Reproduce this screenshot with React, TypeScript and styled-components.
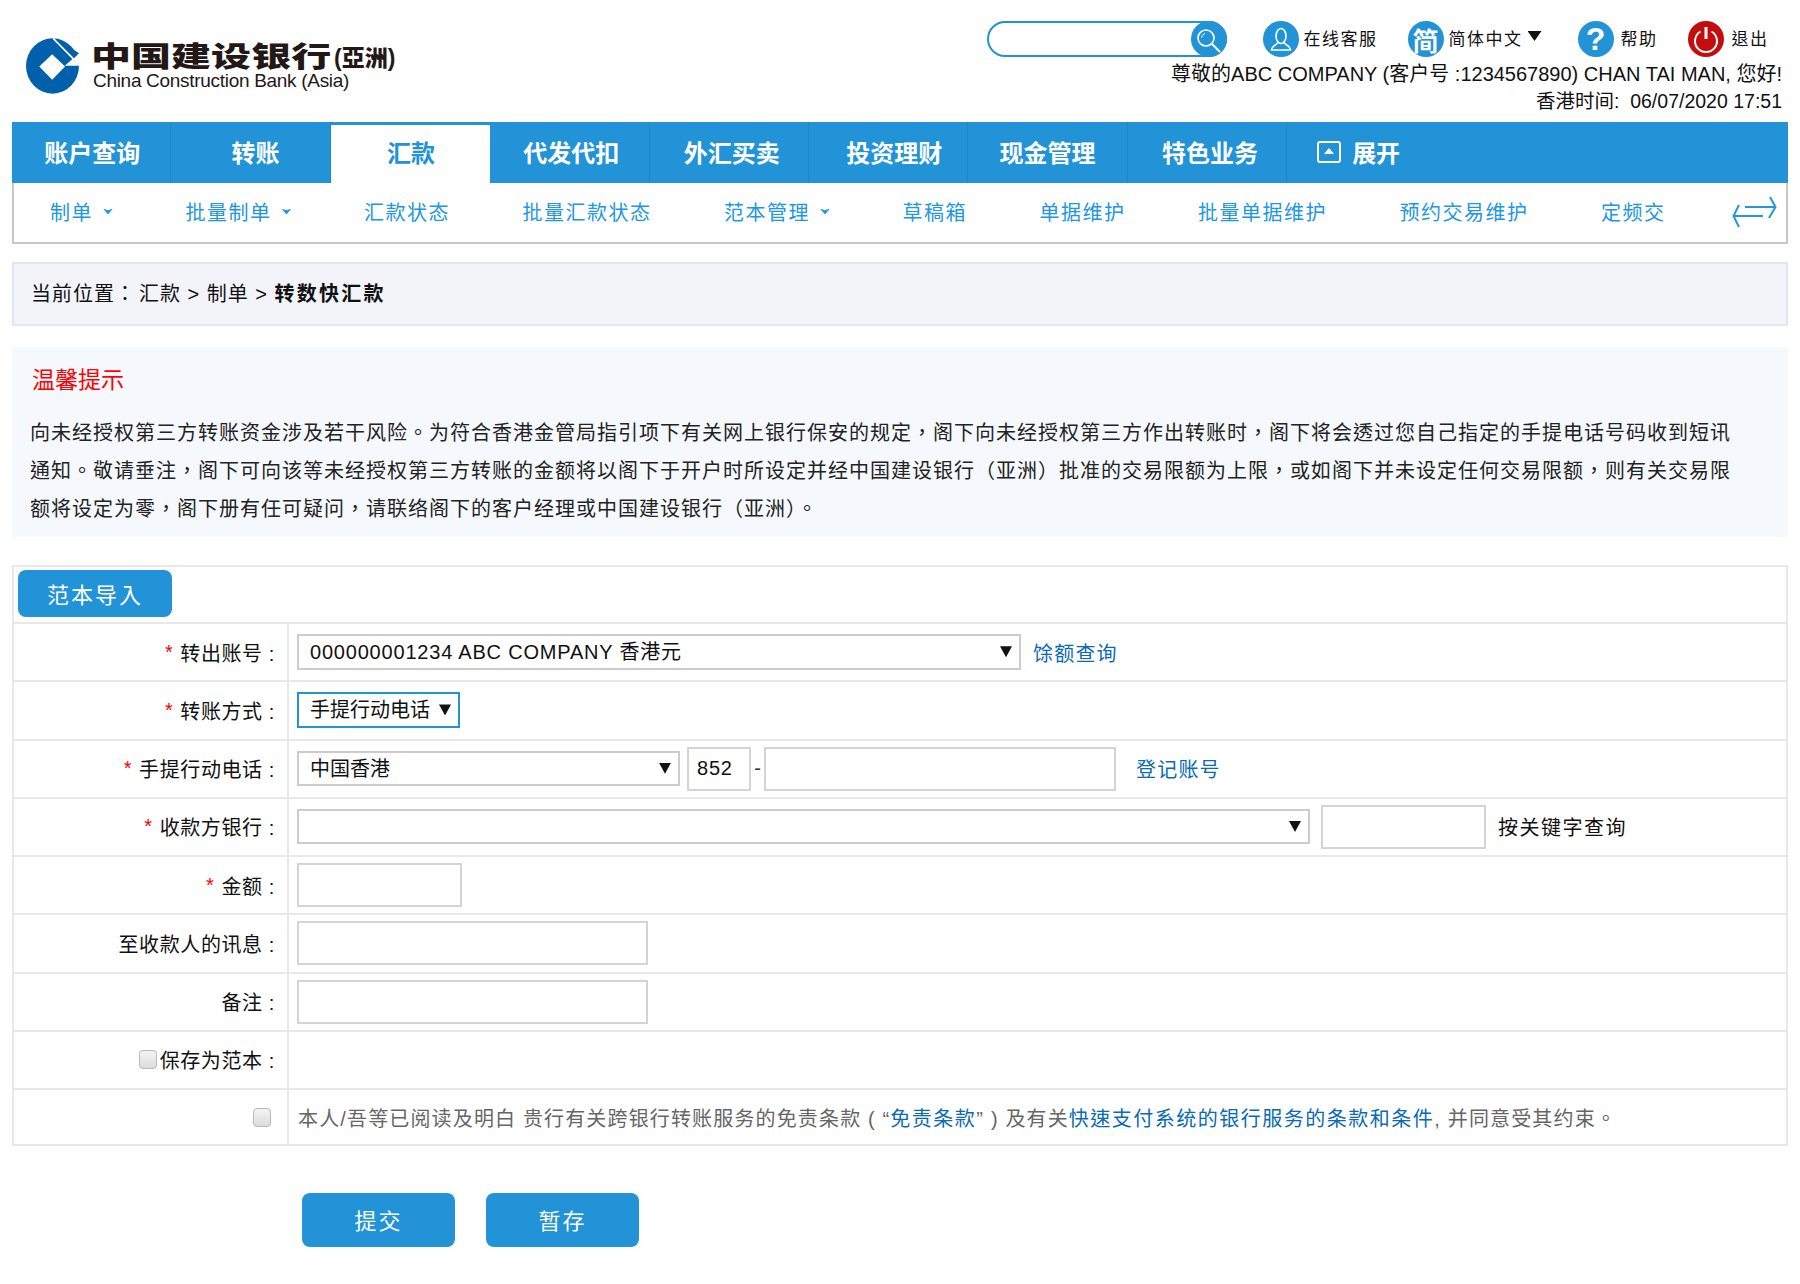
import { FC } from 'react';
import styled, { createGlobalStyle } from 'styled-components';

const FONT = `'Liberation Sans', 'Noto Sans CJK TC', sans-serif`;
const BLUE = '#2193d6';
const RED = '#c40d0d';
const LINK = '#0a6ab5';
const SUB_BLUE = '#2196e3';

const GlobalStyle = createGlobalStyle`
  html, body {
    margin: 0;
    background: #ffffff;
  }
  body {
    font-family: ${FONT};
    color: #111111;
  }
  * {
    box-sizing: border-box;
  }
`;

const Page = styled.div`
  width: 1800px;
  min-height: 1284px;
  padding: 0 12px;
`;

const Header = styled.header`
  display: flex;
  justify-content: space-between;
  height: 122px;
`;

const Logo = styled.a`
  display: flex;
  gap: 12px;
  padding: 38px 0 0 14px;
  color: #231815;
`;

const LogoText = styled.div`
  display: flex;
  flex-direction: column;
  padding-top: 6px;
`;

const LogoNameRow = styled.div`
  display: flex;
  align-items: flex-end;
  height: 27px;
`;

const LogoName = styled.span`
  display: block;
  width: 168px;
  font-size: 28px;
  line-height: 27px;
  font-weight: 900;
  white-space: nowrap;
  transform: scaleX(1.43);
  transform-origin: left center;
`;

const LogoArea = styled.span`
  margin-left: 75px;
  font-size: 23px;
  line-height: 26px;
  font-weight: 900;
  white-space: nowrap;
`;

const LogoEn = styled.span`
  margin-left: 2px;
  font-size: 19px;
  line-height: 20px;
  letter-spacing: -0.3px;
  white-space: nowrap;
`;

const HeaderRight = styled.div`
  display: flex;
  flex-direction: column;
  align-items: flex-end;
  padding: 21px 6px 0 0;
`;

const Tools = styled.div`
  display: flex;
  align-items: center;
  gap: 30px;
  height: 36px;
  padding-right: 13.5px;
`;

const Search = styled.div`
  display: flex;
  justify-content: flex-end;
  width: 240px;
  height: 36px;
  margin-right: 5.5px;
  border: 2px solid ${BLUE};
  border-radius: 18px;
  position: relative;
`;

const SearchIcon = styled.svg`
  position: absolute;
  top: -2px;
  right: -2px;
`;

const Tool = styled.div<{ $gap: number }>`
  display: flex;
  align-items: center;
  gap: ${(p) => p.$gap}px;
  font-size: 17px;
  letter-spacing: 1.5px;
  white-space: nowrap;
`;

const ToolText = styled.span`
  position: relative;
  top: -2px;
`;

const Badge = styled.span<{ $size?: number; $bg?: string }>`
  display: flex;
  align-items: center;
  justify-content: center;
  width: 36px;
  height: 36px;
  border-radius: 50%;
  background: ${(p) => p.$bg ?? BLUE};
  color: #ffffff;
  font-size: ${(p) => p.$size ?? 26}px;
  font-weight: 700;
  letter-spacing: 0;
`;

const LangCaret = styled.i`
  display: block;
  width: 14px;
  height: 10px;
  margin: -6px 6px 0 0;
  background: #111111;
  clip-path: polygon(0 0, 100% 0, 50% 100%);
`;

const Greeting = styled.div`
  margin-top: 4px;
  font-size: 20px;
  line-height: 27px;
  white-space: pre;
`;

const Clock = styled.div`
  font-size: 19.5px;
  line-height: 27px;
  white-space: pre;
`;

const Nav = styled.nav`
  display: flex;
  height: 61px;
  background: ${BLUE};
`;

const NavTab = styled.a<{ $active?: boolean; $nudge: number }>`
  display: flex;
  align-items: center;
  justify-content: center;
  width: 159.4px;
  margin-top: ${(p) => (p.$active ? '3px' : '0')};
  padding-bottom: ${(p) => (p.$active ? '5px' : '2px')};
  padding-left: ${(p) => p.$nudge}px;
  background: ${(p) => (p.$active ? '#ffffff' : 'transparent')};
  color: ${(p) => (p.$active ? BLUE : '#ffffff')};
  border-right: 1px solid ${(p) => (p.$active ? '#ffffff' : '#1d86c4')};
  font-size: 24px;
  font-weight: 700;
`;

const NavExpand = styled.a`
  display: flex;
  align-items: center;
  gap: 11px;
  padding: 0 0 2px 30px;
  color: #ffffff;
  font-size: 24px;
  font-weight: 700;
`;

const SubNav = styled.div`
  display: flex;
  align-items: center;
  gap: 72.5px;
  height: 61px;
  padding: 0 8px 2px 36px;
  border: 2px solid #c8c8c8;
  border-top: 0;
`;

const SubItem = styled.a`
  display: flex;
  align-items: center;
  gap: 10px;
  color: ${SUB_BLUE};
  font-size: 20px;
  letter-spacing: 1.5px;
  white-space: nowrap;
`;

const SubCaret = styled.i`
  display: block;
  width: 10px;
  height: 6px;
  background: ${SUB_BLUE};
  clip-path: polygon(0 0, 50% 30%, 100% 0, 50% 100%);
`;

const SubArrow = styled.svg`
  flex-shrink: 0;
  margin-left: -6px;
`;

const Breadcrumb = styled.div`
  display: flex;
  align-items: center;
  height: 64px;
  margin-top: 18px;
  padding: 0 0 4px 17px;
  background: #f3f4fa;
  border: 2px solid #e3e4f4;
  font-size: 20px;
  letter-spacing: 1px;
  white-space: pre;
`;

const CrumbPath = styled.span`
  margin-left: 3px;
`;

const Current = styled.b`
  font-weight: 700;
  letter-spacing: 2.2px;
`;

const Notice = styled.section`
  height: 190px;
  margin-top: 21px;
  padding: 17px 18px 0;
  background: #f5f9fd;
`;

const NoticeTitle = styled.h3`
  margin: 0 0 18px 2px;
  color: #ff0000;
  font-size: 23px;
  line-height: 32px;
  font-weight: 400;
`;

const NoticeLine = styled.p`
  margin: 0;
  color: #222222;
  font-size: 20px;
  line-height: 38px;
  letter-spacing: 1px;
  white-space: nowrap;
`;

const Form = styled.form`
  margin-top: 28px;
  border: 2px solid #e8e8e8;
`;

const TemplateRow = styled.div`
  height: 57px;
  padding: 3px 0 0 4px;
  border-bottom: 2px solid #e8e8e8;
`;

const PrimaryButton = styled.button<{ $w: number; $h: number }>`
  display: block;
  width: ${(p) => p.$w}px;
  height: ${(p) => p.$h}px;
  padding: 0 0 2px;
  border: 0;
  border-radius: 8px;
  background: ${BLUE};
  color: #ffffff;
  font-family: ${FONT};
  font-size: 22px;
  letter-spacing: 2px;
`;

const Row = styled.div<{ $last?: boolean }>`
  display: grid;
  grid-template-columns: 275px 1fr;
  height: ${(p) => (p.$last ? '54px' : '58.25px')};
  border-bottom: ${(p) => (p.$last ? '0' : '2px solid #e8e8e8')};
`;

const Label = styled.label`
  display: flex;
  align-items: center;
  justify-content: flex-end;
  padding-right: 12px;
  border-right: 2px solid #e8e8e8;
  font-size: 20px;
  letter-spacing: 0.6px;
  white-space: pre;
`;

const Star = styled.span`
  margin-right: 7px;
  color: #ff0000;
`;

const Field = styled.div`
  display: flex;
  align-items: center;
  padding-left: 8px;
  font-size: 20px;
`;

const SelectBox = styled.div<{ $w: number; $h?: number }>`
  position: relative;
  width: ${(p) => p.$w}px;
  height: ${(p) => p.$h ?? 35}px;
  &::after {
    content: '';
    position: absolute;
    top: 50%;
    right: 9px;
    width: 12px;
    height: 11px;
    margin-top: -6px;
    background: #111111;
    clip-path: polygon(0 0, 100% 0, 50% 100%);
    pointer-events: none;
  }
`;

const Select = styled.select<{ $focus?: boolean; $spacing?: number }>`
  appearance: none;
  display: block;
  width: 100%;
  height: 100%;
  padding: 0 24px 0 11px;
  background: #ffffff;
  border: 2px solid ${(p) => (p.$focus ? BLUE : '#cccccc')};
  border-radius: 0;
  color: #111111;
  font-family: ${FONT};
  font-size: 20px;
  letter-spacing: ${(p) => p.$spacing ?? 0}px;
  outline: none;
`;

const Input = styled.input<{ $w: number; $ml?: number }>`
  width: ${(p) => p.$w}px;
  height: 44px;
  margin-left: ${(p) => p.$ml ?? 0}px;
  padding: 0 8px;
  background: #ffffff;
  border: 2px solid #d4d4d4;
  color: #111111;
  font-family: ${FONT};
  font-size: 20px;
  letter-spacing: 0.8px;
  outline: none;
`;

const Link = styled.a<{ $ml: number }>`
  margin-left: ${(p) => p.$ml}px;
  color: ${LINK};
  letter-spacing: 1.2px;
  white-space: nowrap;
`;

const Dash = styled.span`
  width: 13px;
  text-align: center;
  color: #333333;
`;

const Hint = styled.span`
  margin-left: 12px;
  letter-spacing: 1.5px;
`;

const Check = styled.input<{ $mr: number }>`
  appearance: none;
  width: 18px;
  height: 19px;
  margin: 0 ${(p) => p.$mr}px 0 0;
  background: linear-gradient(#f4f4f4, #dcdcdc);
  border: 1px solid #b9b9b9;
  border-radius: 4px;
`;

const Terms = styled.div`
  display: flex;
  align-items: center;
  padding-left: 9px;
  color: #666666;
  font-size: 20px;
  letter-spacing: 1.15px;
  white-space: pre;
`;

const TermsLink = styled.a`
  color: ${LINK};
  letter-spacing: 1.5px;
`;

const Actions = styled.div`
  display: flex;
  gap: 31px;
  margin-top: 47px;
  padding-left: 290px;
`;

const tabs = [
  { name: '账户查询', nudge: 2 },
  { name: '转账', nudge: 10 },
  { name: '汇款', nudge: 2 },
  { name: '代发代扣', nudge: 4 },
  { name: '外汇买卖', nudge: 6 },
  { name: '投资理财', nudge: 12 },
  { name: '现金管理', nudge: 0 },
  { name: '特色业务', nudge: 6 },
];

const subItems = [
  { name: '制单', caret: true },
  { name: '批量制单', caret: true },
  { name: '汇款状态' },
  { name: '批量汇款状态' },
  { name: '范本管理', caret: true },
  { name: '草稿箱' },
  { name: '单据维护' },
  { name: '批量单据维护' },
  { name: '预约交易维护' },
  { name: '定频交' },
];

const noticeLines = [
  '向未经授权第三方转账资金涉及若干风险。为符合香港金管局指引项下有关网上银行保安的规定，阁下向未经授权第三方作出转账时，阁下将会透过您自己指定的手提电话号码收到短讯',
  '通知。敬请垂注，阁下可向该等未经授权第三方转账的金额将以阁下于开户时所设定并经中国建设银行（亚洲）批准的交易限额为上限，或如阁下并未设定任何交易限额，则有关交易限',
  '额将设定为零，阁下册有任可疑问，请联络阁下的客户经理或中国建设银行（亚洲）。',
];

const LogoMark: FC = () => (
  <svg width="53" height="56" viewBox="18 18 160 167">
    <ellipse cx="98" cy="101.5" rx="80" ry="83.5" fill="#0060ab" />
    <polygon points="135,101 178,63 200,63 200,101" fill="#ffffff" />
    <polygon points="112,19 178,63 160,80 105,25" fill="#0060ab" />
    <line x1="100" y1="18" x2="161" y2="80" stroke="#ffffff" strokeWidth="5" />
    <polygon points="97,66 136,103 97,143 58,103" fill="#ffffff" />
  </svg>
);

const App: FC = () => {
  return (
    <Page>
      <GlobalStyle />
      <Header>
        <Logo>
          <LogoMark />
          <LogoText>
            <LogoNameRow>
              <LogoName>中国建设银行</LogoName>
              <LogoArea>(亞洲)</LogoArea>
            </LogoNameRow>
            <LogoEn>China Construction Bank (Asia)</LogoEn>
          </LogoText>
        </Logo>
        <HeaderRight>
          <Tools>
            <Search>
              <SearchIcon width="36" height="36" viewBox="0 0 36 36">
                <circle cx="18" cy="18" r="18" fill={BLUE} />
                <circle cx="15" cy="17" r="8" fill="none" stroke="#ffffff" strokeWidth="1.6" />
                <path d="M21 23l8 8" stroke="#ffffff" strokeWidth="2" />
                <path d="M10.500 16.500a5 5 0 0 1 3.500-4" fill="none" stroke="#ffffff" strokeWidth="1" />
              </SearchIcon>
            </Search>
            <Tool $gap={5}>
              <Badge>
                <svg width="36" height="36" viewBox="0 0 36 36">
                  <ellipse cx="18" cy="15" rx="5" ry="7.500" fill="none" stroke="#ffffff" strokeWidth="1.6" />
                  <path
                    d="M15 21c0 3-6 3-6.500 8h19c-.5-5-6.500-5-6.500-8"
                    fill="none"
                    stroke="#ffffff"
                    strokeWidth="1.6"
                  />
                </svg>
              </Badge>
              <ToolText>在线客服</ToolText>
            </Tool>
            <Tool $gap={5}>
              <Badge>简</Badge>
              <ToolText>简体中文</ToolText>
              <LangCaret />
            </Tool>
            <Tool $gap={7}>
              <Badge $size={32}>?</Badge>
              <ToolText>帮助</ToolText>
            </Tool>
            <Tool $gap={8}>
              <Badge $bg={RED}>
                <svg width="36" height="36" viewBox="0 0 36 36">
                  <path d="M12.500 10.500a11 11 0 1 0 11 0" fill="none" stroke="#ffffff" strokeWidth="2" />
                  <path d="M18 6v12" stroke="#ffffff" strokeWidth="3" />
                </svg>
              </Badge>
              <ToolText>退出</ToolText>
            </Tool>
          </Tools>
          <Greeting>尊敬的ABC COMPANY (客户号 :1234567890) CHAN TAI MAN, 您好!</Greeting>
          <Clock>香港时间:  06/07/2020 17:51</Clock>
        </HeaderRight>
      </Header>

      <Nav>
        {tabs.map((tab) => (
          <NavTab key={tab.name} $active={tab.name === '汇款'} $nudge={tab.nudge}>
            {tab.name}
          </NavTab>
        ))}
        <NavExpand>
          <svg width="24" height="22" viewBox="0 0 24 22">
            <rect x="1" y="1" width="22" height="20" rx="2" fill="none" stroke="#ffffff" strokeWidth="2" />
            <polygon points="12,7 17,13 7,13" fill="#ffffff" />
          </svg>
          展开
        </NavExpand>
      </Nav>
      <SubNav>
        {subItems.map((item) => (
          <SubItem key={item.name}>
            {item.name}
            {item.caret && <SubCaret />}
          </SubItem>
        ))}
        <SubArrow width="46" height="32" viewBox="0 0 46 32" fill="none" stroke={SUB_BLUE} strokeWidth="2">
          <path d="M13 11h30M38 1l5.500 10L37 22" />
          <path d="M31 20H1.500M7 9L1.500 20 7 31" />
        </SubArrow>
      </SubNav>

      <Breadcrumb>
        当前位置：
        <CrumbPath>
          汇款 &gt; 制单 &gt; <Current>转数快汇款</Current>
        </CrumbPath>
      </Breadcrumb>

      <Notice>
        <NoticeTitle>温馨提示</NoticeTitle>
        {noticeLines.map((line) => (
          <NoticeLine key={line}>{line}</NoticeLine>
        ))}
      </Notice>

      <Form>
        <TemplateRow>
          <PrimaryButton type="button" $w={154} $h={47}>
            范本导入
          </PrimaryButton>
        </TemplateRow>
        <Row>
          <Label>
            <Star>*</Star>转出账号 :
          </Label>
          <Field>
            <SelectBox $w={724} $h={36}>
              <Select $spacing={0.8}>
                <option>000000001234 ABC COMPANY 香港元</option>
              </Select>
            </SelectBox>
            <Link $ml={12}>馀额查询</Link>
          </Field>
        </Row>
        <Row>
          <Label>
            <Star>*</Star>转账方式 :
          </Label>
          <Field>
            <SelectBox $w={163} $h={36}>
              <Select $focus>
                <option>手提行动电话</option>
              </Select>
            </SelectBox>
          </Field>
        </Row>
        <Row>
          <Label>
            <Star>*</Star>手提行动电话 :
          </Label>
          <Field>
            <SelectBox $w={383}>
              <Select>
                <option>中国香港</option>
              </Select>
            </SelectBox>
            <Input $w={64} $ml={7} defaultValue="852" />
            <Dash>-</Dash>
            <Input $w={352} />
            <Link $ml={20}>登记账号</Link>
          </Field>
        </Row>
        <Row>
          <Label>
            <Star>*</Star>收款方银行 :
          </Label>
          <Field>
            <SelectBox $w={1013}>
              <Select>
                <option></option>
              </Select>
            </SelectBox>
            <Input $w={165} $ml={11} />
            <Hint>按关键字查询</Hint>
          </Field>
        </Row>
        <Row>
          <Label>
            <Star>*</Star>金额 :
          </Label>
          <Field>
            <Input $w={165} />
          </Field>
        </Row>
        <Row>
          <Label>至收款人的讯息 :</Label>
          <Field>
            <Input $w={351} />
          </Field>
        </Row>
        <Row>
          <Label>备注 :</Label>
          <Field>
            <Input $w={351} />
          </Field>
        </Row>
        <Row>
          <Label>
            <Check type="checkbox" $mr={3} />
            保存为范本 :
          </Label>
          <Field />
        </Row>
        <Row $last>
          <Label>
            <Check type="checkbox" $mr={4} />
          </Label>
          <Terms>
            本人/吾等已阅读及明白 贵行有关跨银行转账服务的免责条款 ( “<TermsLink>免责条款</TermsLink>” ) 及有关
            <TermsLink>快速支付系统的银行服务的条款和条件</TermsLink>, 并同意受其约束。
          </Terms>
        </Row>
      </Form>

      <Actions>
        <PrimaryButton type="button" $w={153} $h={54}>
          提交
        </PrimaryButton>
        <PrimaryButton type="button" $w={153} $h={54}>
          暂存
        </PrimaryButton>
      </Actions>
    </Page>
  );
};

export default App;
